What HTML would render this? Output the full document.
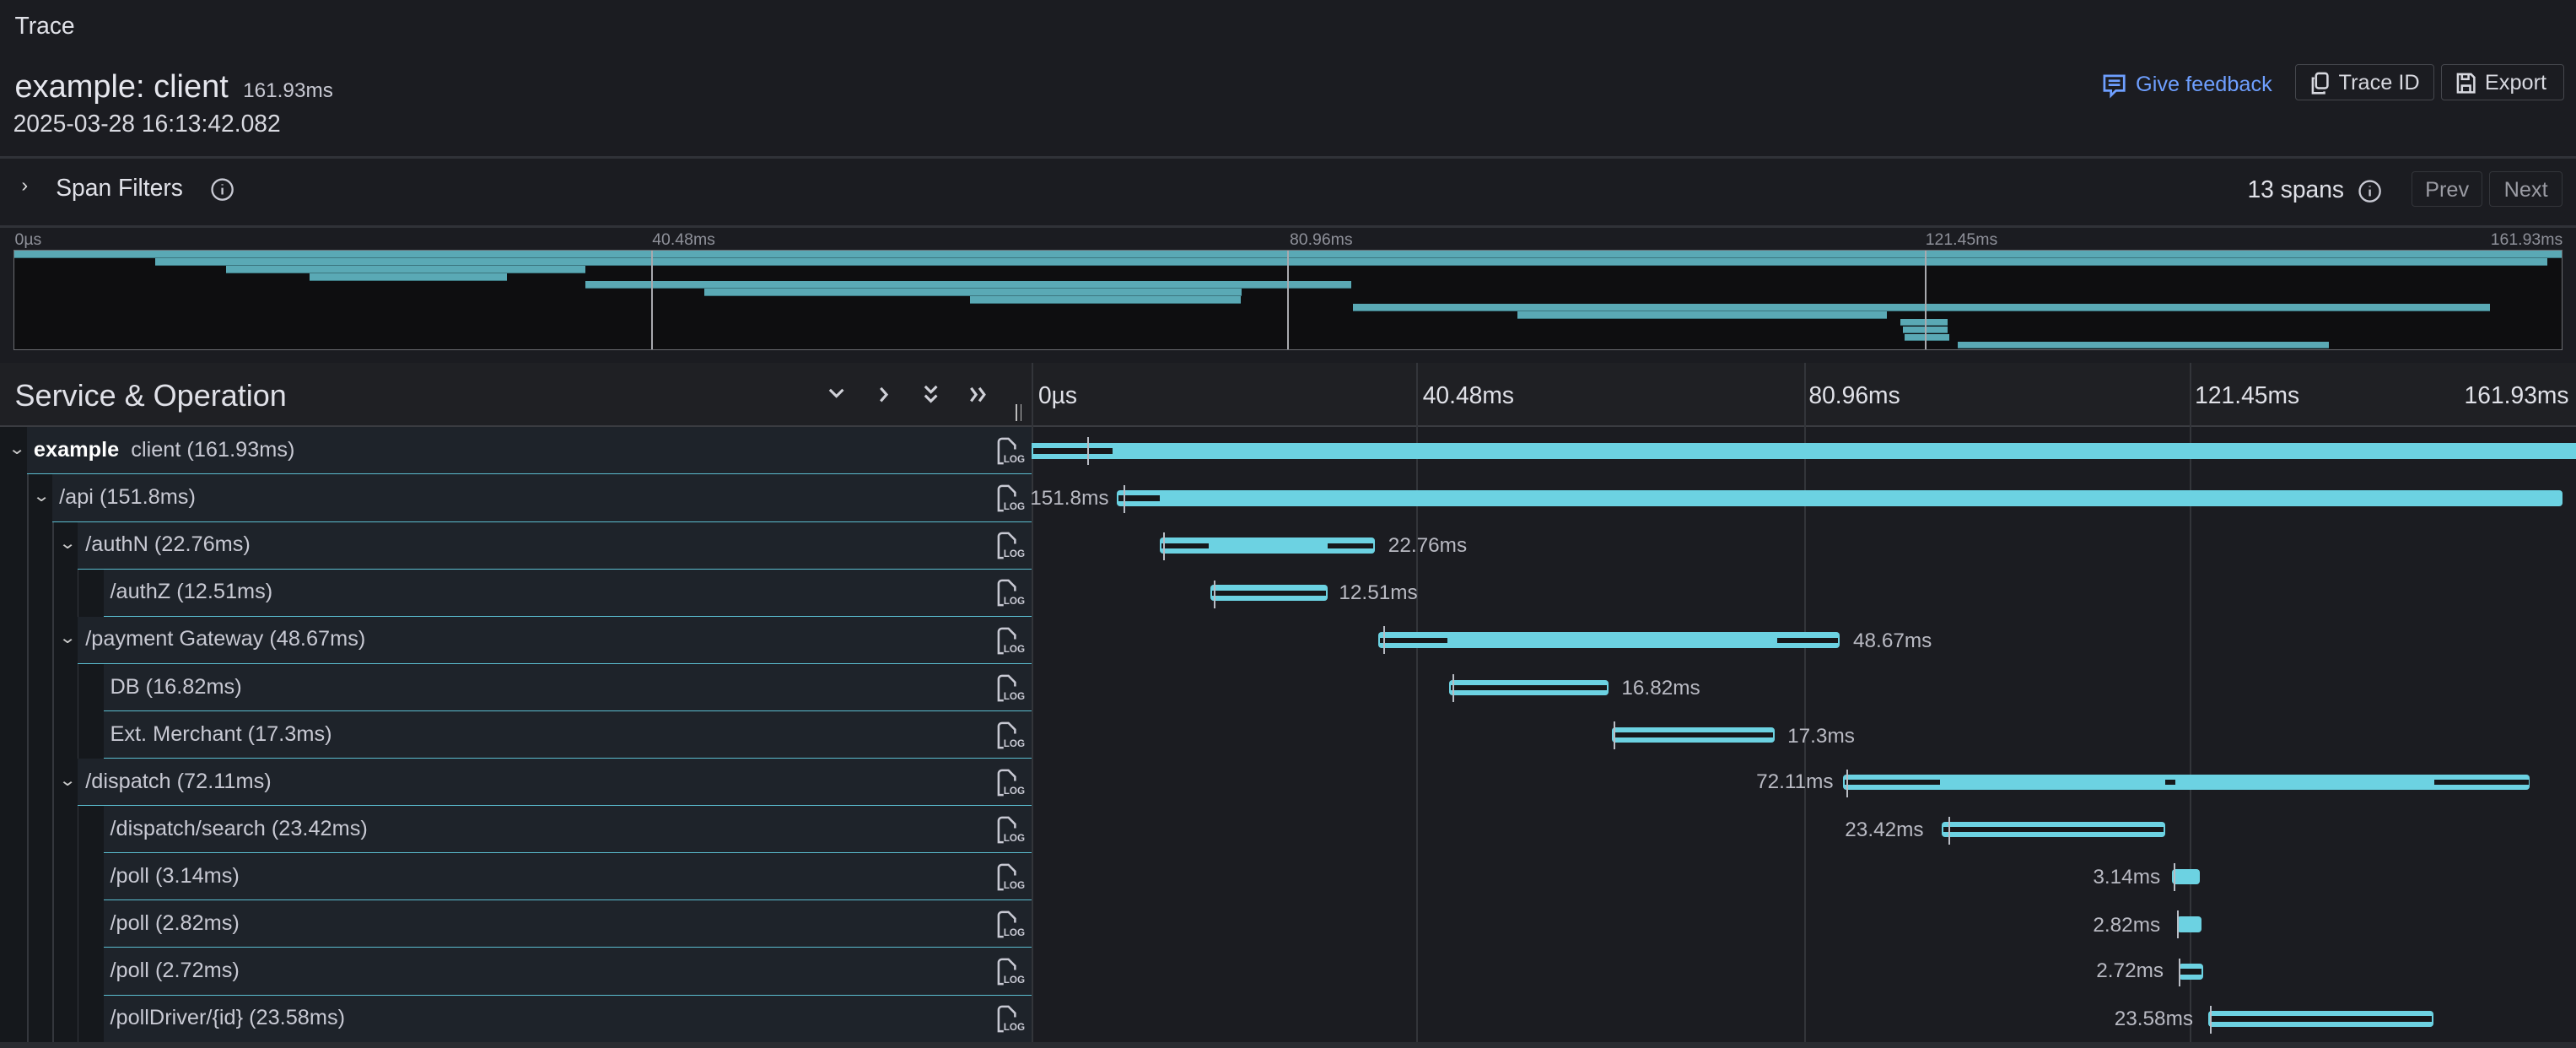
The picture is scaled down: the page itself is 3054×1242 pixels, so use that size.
<!DOCTYPE html>
<html><head><meta charset="utf-8"><style>
html,body{margin:0;padding:0;background:#1b1c21;overflow:hidden}
body{width:3054px;height:1242px}
#z{zoom:1.9477;width:1568px;height:638px;position:relative;font-family:"Liberation Sans",sans-serif;color:#ccccdc}
.a{position:absolute;white-space:nowrap}
.hr{position:absolute;left:0;width:1568px;height:1px;background:#2e3036}
.btn{position:absolute;border:1px solid #45474d;border-radius:2px;height:22px;font-size:13px;line-height:22px;color:#d8d9e0;box-sizing:border-box}
.mm{position:absolute;height:4px;background:#5aa9b5;border-bottom:1px solid #3c7780}
.row{position:absolute;left:0;width:628px;height:28.8px;background:#15181c}
.rc{position:absolute;top:0;bottom:0;right:0;background:#1e232a;border-bottom:1px solid #5bbdd0;box-sizing:border-box}
.vl{position:absolute;top:0;bottom:0;width:1px;background:#34373d}
.tx{position:absolute;top:6.5px;font-size:13px;color:#c8c9d3}
.chev{position:absolute;top:7px;font-size:10px;color:#ccc;transform:scaleX(1.3)}
.log{position:absolute;left:606px;top:5px}
.bar{position:absolute;height:9.5px;background:#6cd2e2;border-radius:2px}
.dk{position:absolute;height:3.2px;background:#16181b;top:3.2px}
.tk{position:absolute;width:1px;height:17px;background:#b9bcc4}
.lb{position:absolute;font-size:12.5px;color:#b9bac3}
</style></head><body><div id="z">
<div class="a" style="left:9px;top:7px;font-size:14.5px;color:#e0e1e8">Trace</div>
<div class="a" style="left:9px;top:42px;font-size:19.5px;color:#e6e7ee">example: client <span style="font-size:12.5px;color:#c8c9d3">&nbsp;161.93ms</span></div>
<div class="a" style="left:8px;top:67px;font-size:14.5px;color:#d8d9e0">2025-03-28 16:13:42.082</div>
<svg class="a" style="left:1279px;top:44px" width="16" height="16" viewBox="0 0 16 16" fill="none" stroke="#6e9fff" stroke-width="1.4"><path d="M2 2h12v9H9l-3 3v-3H2z"/><path d="M4.5 5h7M4.5 7.5h7"/></svg>
<div class="a" style="left:1300px;top:44px;font-size:13px;color:#6e9fff">Give feedback</div>
<div class="btn" style="left:1397px;top:39px;width:85px"><svg style="position:absolute;left:8px;top:4px" width="13" height="14" viewBox="0 0 13 14" fill="none" stroke="#d8d9e0" stroke-width="1.3"><rect x="4" y="1" width="7" height="9" rx="1.5"/><path d="M3 4H2v9h7v-1"/></svg><span style="position:absolute;left:26px">Trace ID</span></div>
<div class="btn" style="left:1486px;top:39px;width:75px"><svg style="position:absolute;left:8px;top:4px" width="13" height="14" viewBox="0 0 13 14" fill="none" stroke="#d8d9e0" stroke-width="1.3"><path d="M1.5 1.5h8l2 2v9h-10z"/><path d="M4 1.5v3h4v-3M4 12.5v-4h5v4"/></svg><span style="position:absolute;left:26px">Export</span></div>
<div class="hr" style="top:95px;background:#303238;height:1.5px"></div>
<div class="a" style="left:13px;top:106px;font-size:12px;color:#ddd">&#8250;</div>
<div class="a" style="left:34px;top:106px;font-size:14.5px;color:#e0e1e8">Span Filters</div>
<svg class="a" style="left:128px;top:108px" width="15" height="15" viewBox="0 0 15 15" fill="none" stroke="#c8c9d3" stroke-width="1.2"><circle cx="7.5" cy="7.5" r="6.2"/><path d="M7.5 6.5v4M7.5 4.3v.6"/></svg>
<div class="a" style="left:1368px;top:107px;font-size:14.5px;color:#e0e1e8">13 spans</div>
<svg class="a" style="left:1435px;top:109px" width="15" height="15" viewBox="0 0 15 15" fill="none" stroke="#c8c9d3" stroke-width="1.2"><circle cx="7.5" cy="7.5" r="6.2"/><path d="M7.5 6.5v4M7.5 4.3v.6"/></svg>
<div class="btn" style="left:1468px;top:104px;width:43px;color:#9a9ba3;border-color:#33353a;text-align:center">Prev</div>
<div class="btn" style="left:1515px;top:104px;width:45px;color:#9a9ba3;border-color:#33353a;text-align:center">Next</div>
<div class="hr" style="top:137px;background:#303238;height:1.5px"></div>
<div class="a" style="left:9px;top:140px;font-size:10px;color:#8e9099">0µs</div>
<div class="a" style="left:397px;top:140px;font-size:10px;color:#8e9099">40.48ms</div>
<div class="a" style="left:785px;top:140px;font-size:10px;color:#8e9099">80.96ms</div>
<div class="a" style="left:1172px;top:140px;font-size:10px;color:#8e9099">121.45ms</div>
<div class="a" style="left:1516px;top:140px;font-size:10px;color:#8e9099">161.93ms</div>
<div class="a" style="left:8px;top:152px;width:1551px;height:60px;background:#0e0e10;border:1px solid #6a6b70;overflow:hidden">
<div class="mm" style="left:0;top:0;width:1551px"></div>
<div class="mm" style="left:86px;top:4.6px;width:1456px"></div>
<div class="mm" style="left:129px;top:9.2px;width:219px"></div>
<div class="mm" style="left:180px;top:13.8px;width:120px"></div>
<div class="mm" style="left:348px;top:18.4px;width:466px"></div>
<div class="mm" style="left:420px;top:23px;width:327px"></div>
<div class="mm" style="left:582px;top:27.6px;width:165px"></div>
<div class="mm" style="left:815px;top:32.2px;width:692px"></div>
<div class="mm" style="left:915px;top:36.8px;width:225px"></div>
<div class="mm" style="left:1148px;top:41.4px;width:29px"></div>
<div class="mm" style="left:1150px;top:46px;width:27px"></div>
<div class="mm" style="left:1151px;top:50.6px;width:27px"></div>
<div class="mm" style="left:1183px;top:55.2px;width:226px"></div>
<div style="position:absolute;left:388px;top:0;width:1px;height:60px;background:#a8a9ae"></div>
<div style="position:absolute;left:775px;top:0;width:1px;height:60px;background:#a8a9ae"></div>
<div style="position:absolute;left:1163px;top:0;width:1px;height:60px;background:#a8a9ae"></div>
</div>
<div class="a" style="left:0;top:221px;width:1568px;height:39px;background:#1f2024;border-bottom:1.5px solid #3a3c41;box-sizing:border-box"></div>
<div class="a" style="left:9px;top:230px;font-size:18.5px;color:#e0e1e8">Service &amp; Operation</div>
<svg class="a" style="left:502px;top:233px" width="105" height="14" viewBox="0 0 105 14" fill="none" stroke="#d0d1d8" stroke-width="1.6"><path d="M3 4l4 4 4-4"/><path d="M34 3l3.5 4-3.5 4"/><path d="M61 2l3.5 3.5L68 2M61 7.5l3.5 3.5L68 7.5"/><path d="M89 3l3 4-3 4M94 3l3 4-3 4"/></svg>
<div class="a" style="left:618px;top:246px;width:1px;height:10px;background:#bbb"></div>
<div class="a" style="left:621px;top:246px;width:1px;height:10px;background:#bbb"></div>
<div class="a" style="left:628px;top:221px;width:1px;height:417px;background:#33353a"></div>
<div class="a" style="left:862px;top:221px;width:1px;height:417px;background:#33353a"></div>
<div class="a" style="left:1098px;top:221px;width:1px;height:417px;background:#33353a"></div>
<div class="a" style="left:1333px;top:221px;width:1px;height:417px;background:#33353a"></div>
<div class="a" style="left:632px;top:232px;font-size:14.5px;color:#e0e1e8">0µs</div>
<div class="a" style="left:866px;top:232px;font-size:14.5px;color:#e0e1e8">40.48ms</div>
<div class="a" style="left:1101px;top:232px;font-size:14.5px;color:#e0e1e8">80.96ms</div>
<div class="a" style="left:1336px;top:232px;font-size:14.5px;color:#e0e1e8">121.45ms</div>
<div class="a" style="left:1500px;top:232px;font-size:14.5px;color:#e0e1e8">161.93ms</div>
<div class="a" style="left:629px;top:260px;width:939px;height:378px;background:#1a1c20;z-index:-1"></div>

<div class="row" style="top:260px"><div class="rc" style="left:16.5px"></div><div class="chev" style="left:6px">&#8964;</div><div class="tx" style="left:20.5px"><b style="color:#fff">example</b>&nbsp; client (161.93ms)</div><svg class="log" width="20" height="19" viewBox="0 0 20 19" fill="none" stroke="#c8c9d3" stroke-width="1.3"><path d="M2 4V17h3M2 4a2 2 0 012-2h4l4 4v2.5"/><text x="5" y="16.5" font-size="6" fill="#c8c9d3" stroke="none" font-family="Liberation Sans" font-weight="bold">LOG</text></svg></div>
<div class="row" style="top:288.8px"><div class="vl" style="left:16.5px"></div><div class="rc" style="left:32px"></div><div class="chev" style="left:21px">&#8964;</div><div class="tx" style="left:36px">/api (151.8ms)</div><svg class="log" width="20" height="19" viewBox="0 0 20 19" fill="none" stroke="#c8c9d3" stroke-width="1.3"><path d="M2 4V17h3M2 4a2 2 0 012-2h4l4 4v2.5"/><text x="5" y="16.5" font-size="6" fill="#c8c9d3" stroke="none" font-family="Liberation Sans" font-weight="bold">LOG</text></svg></div>
<div class="row" style="top:317.6px"><div class="vl" style="left:16.5px"></div><div class="vl" style="left:32px"></div><div class="rc" style="left:47px"></div><div class="chev" style="left:37px">&#8964;</div><div class="tx" style="left:52px">/authN (22.76ms)</div><svg class="log" width="20" height="19" viewBox="0 0 20 19" fill="none" stroke="#c8c9d3" stroke-width="1.3"><path d="M2 4V17h3M2 4a2 2 0 012-2h4l4 4v2.5"/><text x="5" y="16.5" font-size="6" fill="#c8c9d3" stroke="none" font-family="Liberation Sans" font-weight="bold">LOG</text></svg></div>
<div class="row" style="top:346.4px"><div class="vl" style="left:16.5px"></div><div class="vl" style="left:32px"></div><div class="vl" style="left:47px"></div><div class="rc" style="left:63px"></div><div class="tx" style="left:67px">/authZ (12.51ms)</div><svg class="log" width="20" height="19" viewBox="0 0 20 19" fill="none" stroke="#c8c9d3" stroke-width="1.3"><path d="M2 4V17h3M2 4a2 2 0 012-2h4l4 4v2.5"/><text x="5" y="16.5" font-size="6" fill="#c8c9d3" stroke="none" font-family="Liberation Sans" font-weight="bold">LOG</text></svg></div>
<div class="row" style="top:375.2px"><div class="vl" style="left:16.5px"></div><div class="vl" style="left:32px"></div><div class="rc" style="left:47px"></div><div class="chev" style="left:37px">&#8964;</div><div class="tx" style="left:52px">/payment Gateway (48.67ms)</div><svg class="log" width="20" height="19" viewBox="0 0 20 19" fill="none" stroke="#c8c9d3" stroke-width="1.3"><path d="M2 4V17h3M2 4a2 2 0 012-2h4l4 4v2.5"/><text x="5" y="16.5" font-size="6" fill="#c8c9d3" stroke="none" font-family="Liberation Sans" font-weight="bold">LOG</text></svg></div>
<div class="row" style="top:404px"><div class="vl" style="left:16.5px"></div><div class="vl" style="left:32px"></div><div class="vl" style="left:47px"></div><div class="rc" style="left:63px"></div><div class="tx" style="left:67px">DB (16.82ms)</div><svg class="log" width="20" height="19" viewBox="0 0 20 19" fill="none" stroke="#c8c9d3" stroke-width="1.3"><path d="M2 4V17h3M2 4a2 2 0 012-2h4l4 4v2.5"/><text x="5" y="16.5" font-size="6" fill="#c8c9d3" stroke="none" font-family="Liberation Sans" font-weight="bold">LOG</text></svg></div>
<div class="row" style="top:432.8px"><div class="vl" style="left:16.5px"></div><div class="vl" style="left:32px"></div><div class="vl" style="left:47px"></div><div class="rc" style="left:63px"></div><div class="tx" style="left:67px">Ext. Merchant (17.3ms)</div><svg class="log" width="20" height="19" viewBox="0 0 20 19" fill="none" stroke="#c8c9d3" stroke-width="1.3"><path d="M2 4V17h3M2 4a2 2 0 012-2h4l4 4v2.5"/><text x="5" y="16.5" font-size="6" fill="#c8c9d3" stroke="none" font-family="Liberation Sans" font-weight="bold">LOG</text></svg></div>
<div class="row" style="top:461.6px"><div class="vl" style="left:16.5px"></div><div class="vl" style="left:32px"></div><div class="rc" style="left:47px"></div><div class="chev" style="left:37px">&#8964;</div><div class="tx" style="left:52px">/dispatch (72.11ms)</div><svg class="log" width="20" height="19" viewBox="0 0 20 19" fill="none" stroke="#c8c9d3" stroke-width="1.3"><path d="M2 4V17h3M2 4a2 2 0 012-2h4l4 4v2.5"/><text x="5" y="16.5" font-size="6" fill="#c8c9d3" stroke="none" font-family="Liberation Sans" font-weight="bold">LOG</text></svg></div>
<div class="row" style="top:490.4px"><div class="vl" style="left:16.5px"></div><div class="vl" style="left:32px"></div><div class="vl" style="left:47px"></div><div class="rc" style="left:63px"></div><div class="tx" style="left:67px">/dispatch/search (23.42ms)</div><svg class="log" width="20" height="19" viewBox="0 0 20 19" fill="none" stroke="#c8c9d3" stroke-width="1.3"><path d="M2 4V17h3M2 4a2 2 0 012-2h4l4 4v2.5"/><text x="5" y="16.5" font-size="6" fill="#c8c9d3" stroke="none" font-family="Liberation Sans" font-weight="bold">LOG</text></svg></div>
<div class="row" style="top:519.2px"><div class="vl" style="left:16.5px"></div><div class="vl" style="left:32px"></div><div class="vl" style="left:47px"></div><div class="rc" style="left:63px"></div><div class="tx" style="left:67px">/poll (3.14ms)</div><svg class="log" width="20" height="19" viewBox="0 0 20 19" fill="none" stroke="#c8c9d3" stroke-width="1.3"><path d="M2 4V17h3M2 4a2 2 0 012-2h4l4 4v2.5"/><text x="5" y="16.5" font-size="6" fill="#c8c9d3" stroke="none" font-family="Liberation Sans" font-weight="bold">LOG</text></svg></div>
<div class="row" style="top:548px"><div class="vl" style="left:16.5px"></div><div class="vl" style="left:32px"></div><div class="vl" style="left:47px"></div><div class="rc" style="left:63px"></div><div class="tx" style="left:67px">/poll (2.82ms)</div><svg class="log" width="20" height="19" viewBox="0 0 20 19" fill="none" stroke="#c8c9d3" stroke-width="1.3"><path d="M2 4V17h3M2 4a2 2 0 012-2h4l4 4v2.5"/><text x="5" y="16.5" font-size="6" fill="#c8c9d3" stroke="none" font-family="Liberation Sans" font-weight="bold">LOG</text></svg></div>
<div class="row" style="top:576.8px"><div class="vl" style="left:16.5px"></div><div class="vl" style="left:32px"></div><div class="vl" style="left:47px"></div><div class="rc" style="left:63px"></div><div class="tx" style="left:67px">/poll (2.72ms)</div><svg class="log" width="20" height="19" viewBox="0 0 20 19" fill="none" stroke="#c8c9d3" stroke-width="1.3"><path d="M2 4V17h3M2 4a2 2 0 012-2h4l4 4v2.5"/><text x="5" y="16.5" font-size="6" fill="#c8c9d3" stroke="none" font-family="Liberation Sans" font-weight="bold">LOG</text></svg></div>
<div class="row" style="top:605.6px"><div class="vl" style="left:16.5px"></div><div class="vl" style="left:32px"></div><div class="vl" style="left:47px"></div><div class="rc" style="left:63px"></div><div class="tx" style="left:67px">/pollDriver/{id} (23.58ms)</div><svg class="log" width="20" height="19" viewBox="0 0 20 19" fill="none" stroke="#c8c9d3" stroke-width="1.3"><path d="M2 4V17h3M2 4a2 2 0 012-2h4l4 4v2.5"/><text x="5" y="16.5" font-size="6" fill="#c8c9d3" stroke="none" font-family="Liberation Sans" font-weight="bold">LOG</text></svg></div>
<div class="a" style="left:0;top:634px;width:1568px;height:4px;background:#2a2c31"></div>

<div class="bar" style="left:628px;top:269.6px;width:940px;border-radius:0"><div class="dk" style="left:1px;width:48px"></div></div><div class="tk" style="left:662px;top:266px"></div>
<div class="lb" style="left:627px;top:296px">151.8ms</div>
<div class="bar" style="left:680px;top:298.4px;width:880px"><div class="dk" style="left:1px;width:25px"></div></div><div class="tk" style="left:684px;top:295px"></div>
<div class="bar" style="left:706px;top:327.2px;width:131px"><div class="dk" style="left:1px;width:29px"></div><div class="dk" style="left:102px;width:28px"></div></div><div class="tk" style="left:708px;top:324px"></div><div class="lb" style="left:845px;top:325px">22.76ms</div>
<div class="bar" style="left:737px;top:356px;width:71px"><div class="dk" style="left:1px;width:69px"></div></div><div class="tk" style="left:739px;top:353px"></div><div class="lb" style="left:815px;top:354px">12.51ms</div>
<div class="bar" style="left:839px;top:384.8px;width:281px"><div class="dk" style="left:1px;width:41px"></div><div class="dk" style="left:243px;width:37px"></div></div><div class="tk" style="left:842px;top:381px"></div><div class="lb" style="left:1128px;top:383px">48.67ms</div>
<div class="bar" style="left:882px;top:413.6px;width:97px"><div class="dk" style="left:1px;width:95px"></div></div><div class="tk" style="left:884px;top:410px"></div><div class="lb" style="left:987px;top:412px">16.82ms</div>
<div class="bar" style="left:981px;top:442.4px;width:99px"><div class="dk" style="left:1px;width:97px"></div></div><div class="tk" style="left:982px;top:439px"></div><div class="lb" style="left:1088px;top:441px">17.3ms</div>
<div class="lb" style="left:1069px;top:469px">72.11ms</div>
<div class="bar" style="left:1122px;top:471.2px;width:418px"><div class="dk" style="left:1px;width:58px"></div><div class="dk" style="left:196px;width:6px"></div><div class="dk" style="left:360px;width:57px"></div></div><div class="tk" style="left:1124px;top:468px"></div>
<div class="lb" style="left:1123px;top:498px">23.42ms</div>
<div class="bar" style="left:1182px;top:500px;width:136px"><div class="dk" style="left:1px;width:134px"></div></div><div class="tk" style="left:1186px;top:497px"></div>
<div class="lb" style="left:1274px;top:527px">3.14ms</div>
<div class="bar" style="left:1322px;top:528.8px;width:17px"></div><div class="tk" style="left:1323px;top:525px"></div>
<div class="lb" style="left:1274px;top:556px">2.82ms</div>
<div class="bar" style="left:1325px;top:557.6px;width:15px"></div><div class="tk" style="left:1325px;top:554px"></div>
<div class="lb" style="left:1276px;top:584px">2.72ms</div>
<div class="bar" style="left:1326px;top:586.4px;width:15px"><div class="dk" style="left:1px;width:13px"></div></div><div class="tk" style="left:1326px;top:583px"></div>
<div class="lb" style="left:1287px;top:613px">23.58ms</div>
<div class="bar" style="left:1344px;top:615.2px;width:137px"><div class="dk" style="left:1px;width:135px"></div></div><div class="tk" style="left:1345px;top:612px"></div>
</div></body></html>
